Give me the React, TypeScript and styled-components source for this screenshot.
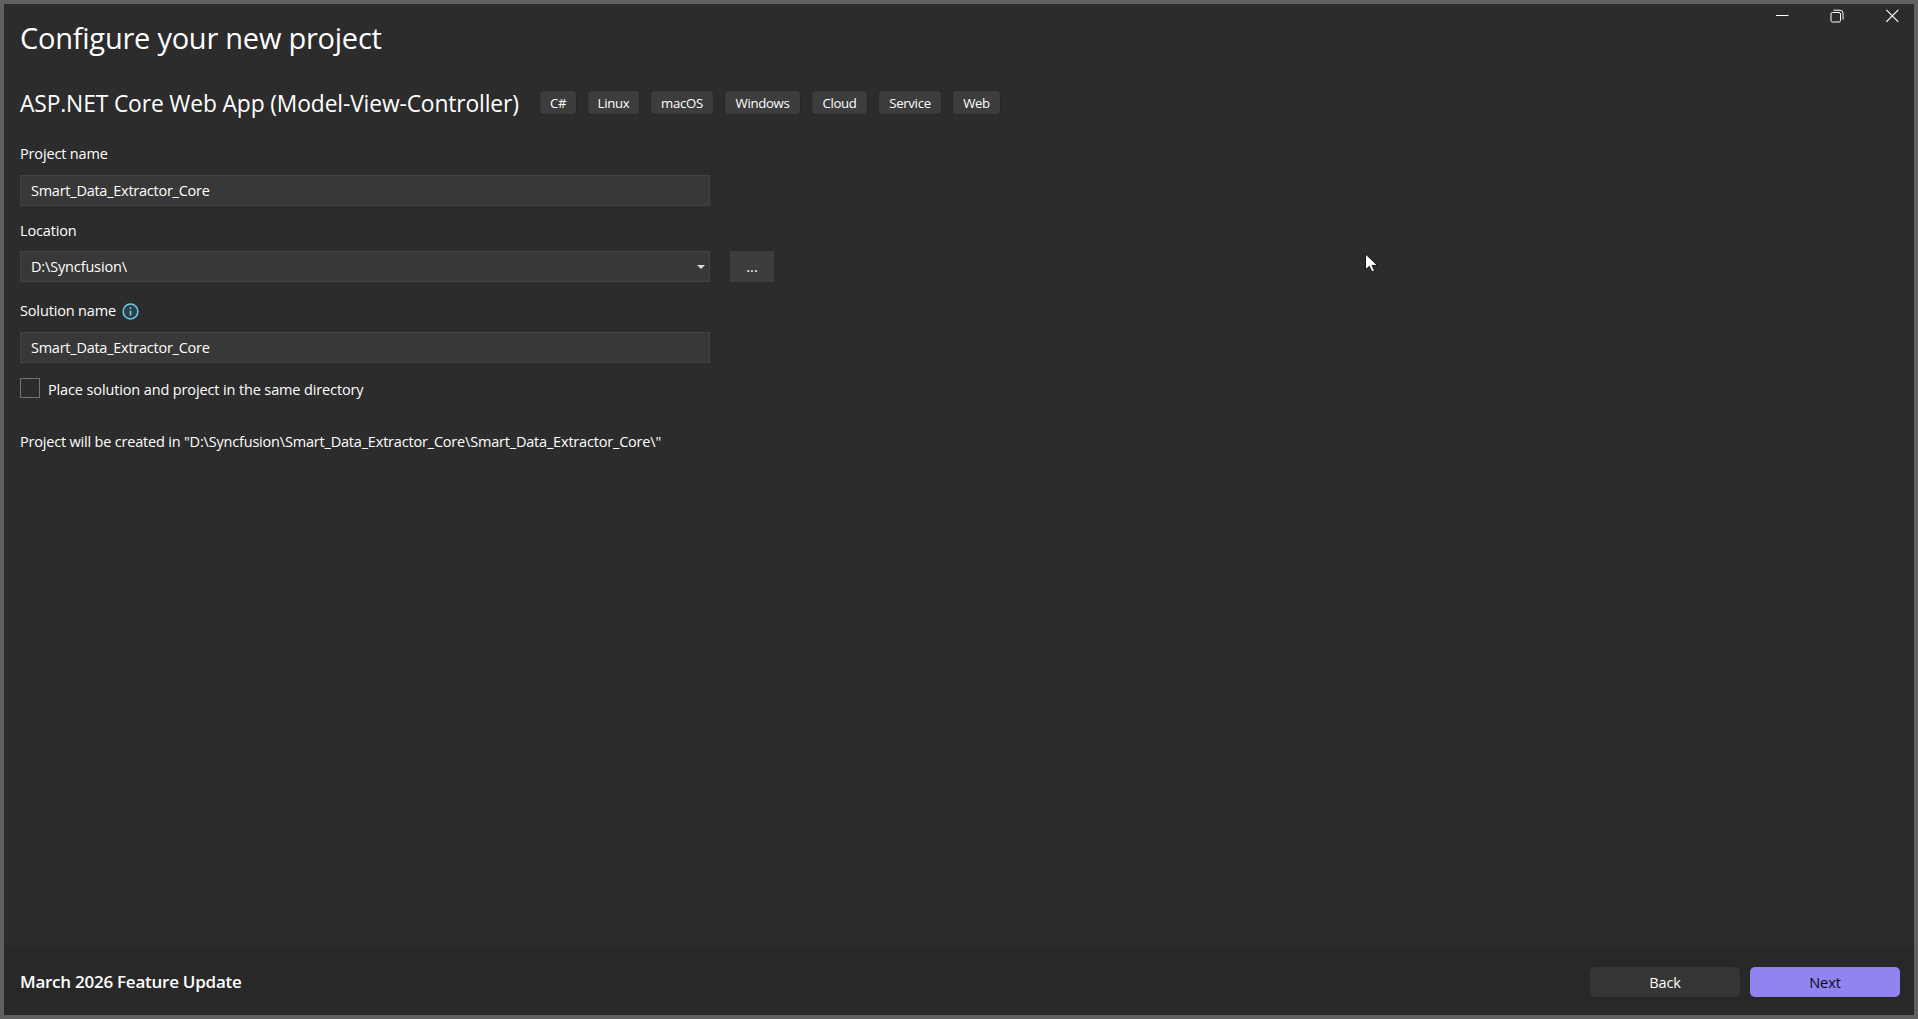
import React from 'react';
import styled, { createGlobalStyle } from 'styled-components';

const GlobalStyle = createGlobalStyle`
  body {
    margin: 0;
    background: #2c2c2c;
    color: #fff;
    font-family: 'Open Sans', 'Noto Sans', sans-serif;
    font-size: 14.5px;
    line-height: 20px;
  }

  * {
    box-sizing: border-box;
  }
`;

const Window = styled.div`
  display: flex;
  flex-direction: column;
  width: 100vw;
  height: 100vh;
  border: 4px solid #606060;
  overflow: hidden;
`;

const Header = styled.header`
  display: flex;
  justify-content: space-between;
  align-items: flex-start;
  height: 84px;
  padding: 14px 0 0 16px;
`;

const Title = styled.h1`
  margin: 0;
  font-size: 29px;
  font-weight: 400;
  line-height: 40px;
  letter-spacing: -0.24px;
  white-space: nowrap;
`;

// Caption buttons (minimize, restore, close)
const Controls = styled.div`
  display: flex;
  margin-top: -14px;
  margin-right: -6px;
`;

const ControlButton = styled.div`
  display: flex;
  align-items: center;
  justify-content: center;
  width: 55px;
  height: 24px;
`;

const Content = styled.main`
  display: flex;
  flex-direction: column;
  flex: 1;
  padding-left: 16px;
`;

const TemplateRow = styled.div`
  display: flex;
  align-items: center;
  height: 29px;
  margin-bottom: 27px;
`;

const TemplateName = styled.h2`
  width: 520px;
  margin: 0;
  padding-top: 2px;
  font-size: 22.8px;
  font-weight: 400;
  line-height: 29px;
  letter-spacing: -0.13px;
  white-space: nowrap;
`;

const Tags = styled.div`
  display: flex;
  gap: 12px;
`;

const Tag = styled.span<{ $width: number }>`
  width: ${({ $width }) => $width}px;
  height: 23px;
  border-radius: 4px;
  background: #3d3d3d;
  box-shadow: 0 0 0 1px #282828;
  font-size: 13.2px;
  line-height: 24px;
  letter-spacing: -0.3px;
  text-align: center;
  white-space: nowrap;
`;

const Field = styled.div<{ $gap: number }>`
  margin-bottom: ${({ $gap }) => $gap}px;
`;

const Label = styled.div<{ $gap?: number }>`
  display: flex;
  align-items: center;
  gap: 6px;
  height: 20px;
  margin-bottom: ${({ $gap }) => $gap ?? 11}px;
`;

const FieldRow = styled.div`
  display: flex;
  gap: 20px;
`;

const TextBox = styled.div`
  display: flex;
  align-items: center;
  justify-content: space-between;
  width: 690px;
  height: 31px;
  padding: 0 4px 0 10px;
  border: 1px solid #434343;
  background: #383838;
`;

const Text = styled.span<{ $tracking?: number }>`
  letter-spacing: ${({ $tracking }) => $tracking ?? -0.15}px;
  white-space: pre;
`;

const BrowseButton = styled.div`
  width: 44px;
  height: 31px;
  background: #3d3d3d;
  line-height: 31px;
  text-align: center;
`;

const CheckRow = styled.div`
  display: flex;
  align-items: center;
  gap: 8px;
  height: 20px;
  margin-bottom: 34px;

  span {
    padding-top: 3px;
  }
`;

const CheckBox = styled.div`
  width: 20px;
  height: 20px;
  border: 1px solid #747474;
`;

const Footer = styled.footer`
  display: flex;
  align-items: center;
  justify-content: space-between;
  height: 69px;
  padding: 4px 14px 0 16px;
  background: #282828;
`;

const Update = styled.div`
  font-size: 17px;
  font-weight: 600;
  padding-bottom: 2px;
  letter-spacing: -0.25px;
`;

const Actions = styled.div`
  display: flex;
  gap: 10px;
  padding-bottom: 1px;
`;

const Button = styled.div<{ $primary?: boolean }>`
  width: 150px;
  height: 30px;
  border-radius: 5px;
  background: ${({ $primary }) => ($primary ? '#9184ee' : '#353535')};
  color: ${({ $primary }) => ($primary ? '#0c0c18' : '#fff')};
  line-height: 31px;
  letter-spacing: -0.1px;
  text-align: center;
`;

const Cursor = styled.svg`
  position: absolute;
  left: 1365px;
  top: 253px;
`;

const tags = [
  { name: 'C#', width: 36 },
  { name: 'Linux', width: 51 },
  { name: 'macOS', width: 62 },
  { name: 'Windows', width: 75 },
  { name: 'Cloud', width: 55 },
  { name: 'Service', width: 62 },
  { name: 'Web', width: 47 },
];

const InfoIcon = () => (
  <svg width="17" height="17" viewBox="0 0 17 17">
    <circle cx="8.5" cy="8.5" r="7.4" fill="#2f4048" stroke="#6ccbf0" strokeWidth="1.5" />
    <path d="M8.5 7.5v5M8.5 4.3v1.6" stroke="#6ccbf0" strokeWidth="1.5" />
  </svg>
);

const App = () => {
  return (
    <>
      <GlobalStyle />
      <Window>
        <Header>
          <Title>Configure your new project</Title>
          <Controls>
            <ControlButton>
              <svg width="13" height="14" fill="none" stroke="#fff">
                <path d="M0 6.5h12.5" />
              </svg>
            </ControlButton>
            <ControlButton>
              <svg width="15" height="14" fill="none" stroke="#fff">
                <rect x="1" y="3.5" width="9.5" height="9.5" rx="1.5" />
                <path d="M3.5 1.2h6.5a3 3 0 0 1 3 3v6.3" />
              </svg>
            </ControlButton>
            <ControlButton>
              <svg width="13" height="14" fill="none" stroke="#fff" strokeWidth="1.2">
                <path d="M0.3 0.8l12 12M12.3 0.8l-12 12" />
              </svg>
            </ControlButton>
          </Controls>
        </Header>

        <Content>
          <TemplateRow>
            <TemplateName>ASP.NET Core Web App (Model-View-Controller)</TemplateName>
            <Tags>
              {tags.map((tag) => (
                <Tag key={tag.name} $width={tag.width}>{tag.name}</Tag>
              ))}
            </Tags>
          </TemplateRow>

          <Field $gap={15}>
            <Label><Text>Project name</Text></Label>
            <TextBox><Text $tracking={-0.25}>Smart_Data_Extractor_Core</Text></TextBox>
          </Field>

          <Field $gap={19}>
            <Label $gap={10}><Text>Location</Text></Label>
            <FieldRow>
              <TextBox>
                <Text>D:\Syncfusion\</Text>
                <svg width="8" height="4">
                  <path d="M0 0h8L4 4z" fill="#dcdcdc" />
                </svg>
              </TextBox>
              <BrowseButton>...</BrowseButton>
            </FieldRow>
          </Field>

          <Field $gap={15}>
            <Label>
              <Text>Solution name</Text>
              <InfoIcon />
            </Label>
            <TextBox><Text $tracking={-0.25}>Smart_Data_Extractor_Core</Text></TextBox>
          </Field>

          <CheckRow>
            <CheckBox />
            <Text $tracking={-0.13}>Place solution and project in the same directory</Text>
          </CheckRow>

          <Text $tracking={-0.19}>Project will be created in "D:\Syncfusion\Smart_Data_Extractor_Core\Smart_Data_Extractor_Core\"</Text>
        </Content>

        <Footer>
          <Update>March 2026 Feature Update</Update>
          <Actions>
            <Button>Back</Button>
            <Button $primary>Next</Button>
          </Actions>
        </Footer>
      </Window>

      <Cursor width="14" height="21" viewBox="0 0 14 21">
        <path d="M0.5 1v15.8l3.8-3.5 2.5 5.6 2.8-1.2-2.5-5.3h5.4z" fill="#fff" stroke="#111" />
      </Cursor>
    </>
  );
};

export default App;
